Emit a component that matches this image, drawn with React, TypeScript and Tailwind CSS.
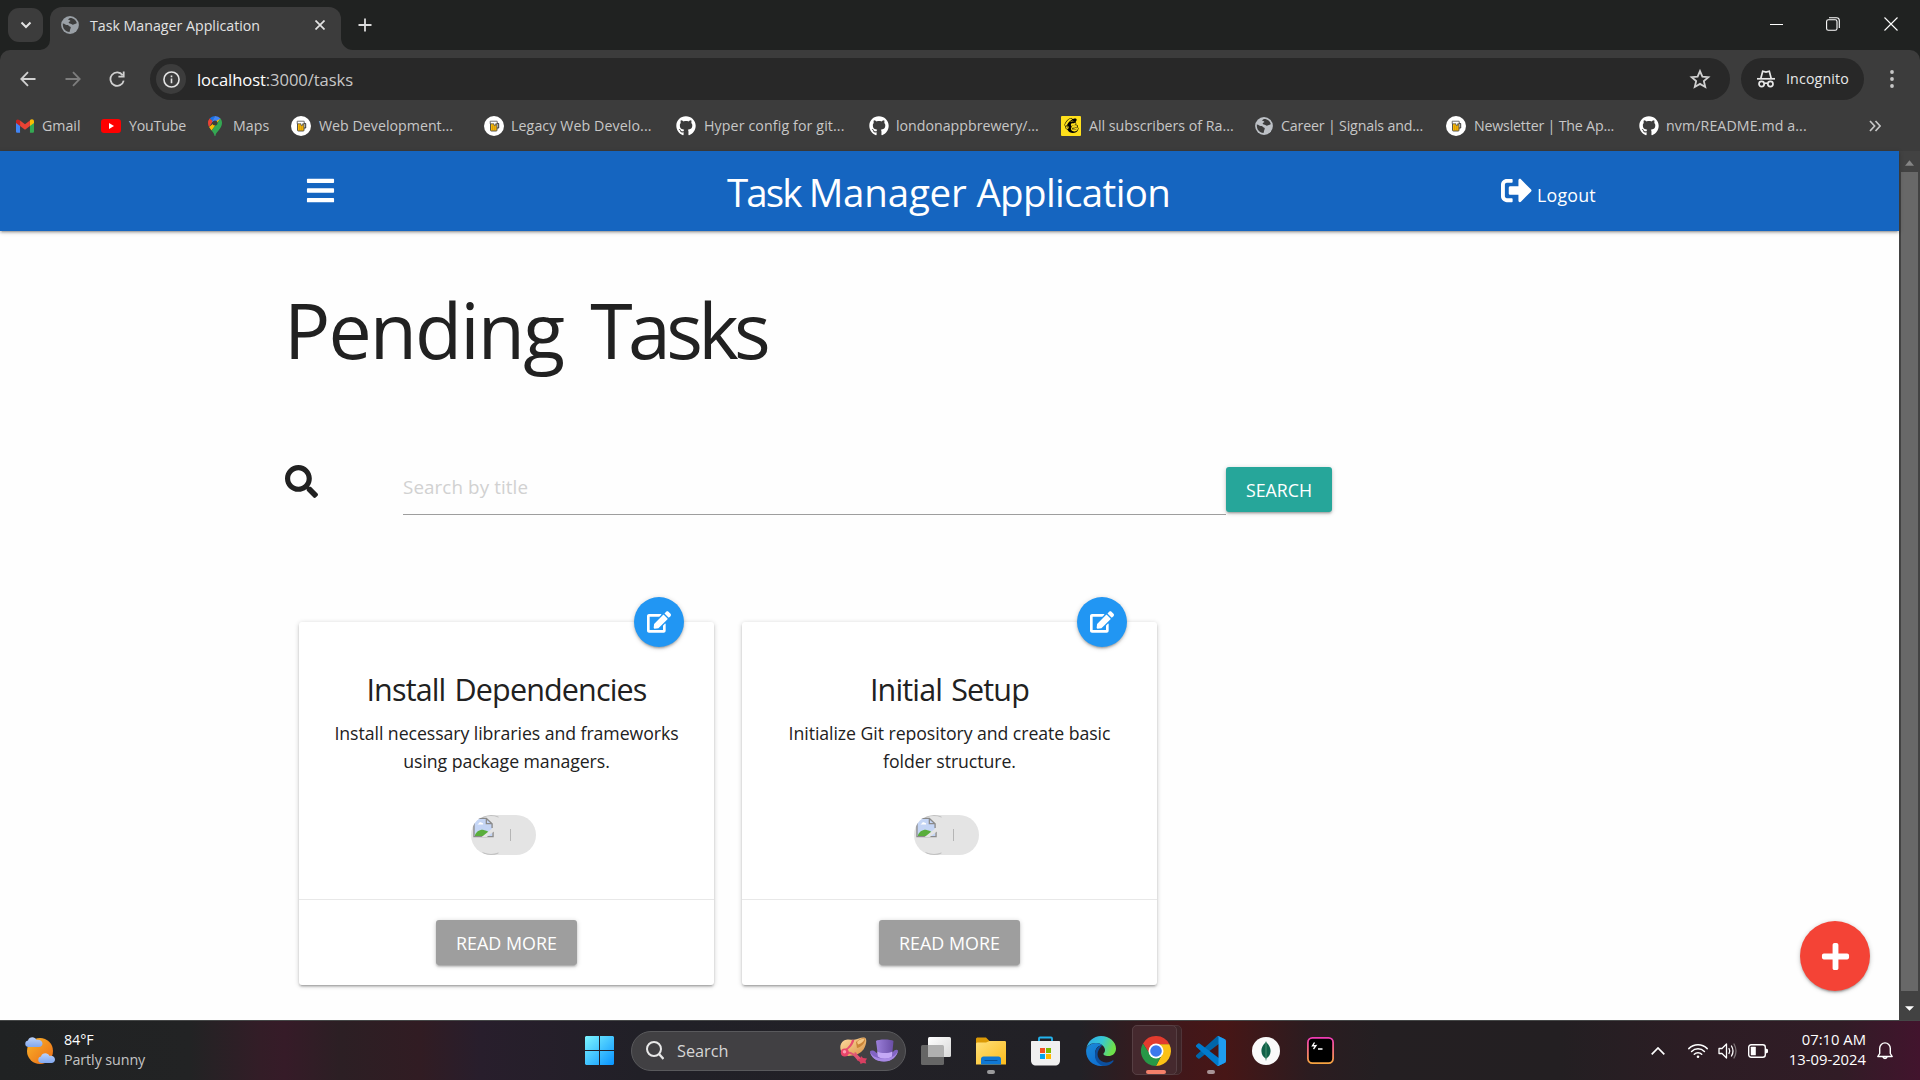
import React from "react";
import {
  FaBars,
  FaSignOutAlt,
  FaSearch,
  FaPlus,
  FaEdit,
  FaGithub,
  FaMailchimp,
} from "react-icons/fa";

/* ---------- small drawings ---------- */

const Globe = ({ color = "#9aa0a6" }: { color?: string }) => (
  <svg viewBox="0 0 18 18" className="h-[18px] w-[18px] shrink-0">
    <circle cx="9" cy="9" r="8.9" fill={color} />
    <path d="M1.8 7.4c2 .2 3 1.6 4.800 1.700 1.200.3 1.100 1.300 2.400 1.500 1 .4 1 1.400.4 2.200-.5.9-.2 2.200-1 3.200C4.500 15.700 1.500 12.500 1.800 7.400zM7 3.400c.7-1 2-1.700 3.500-1.400 2.600.6 4.700 2.500 5.300 5-.6 1.200-1.800.7-2.600 1.300-.9.700-2 .6-2.800-.2-.7-.6-2.300-.2-2.700-1.300-.2-.9.900-1.300 1.600-1.600.3-.8-.6-1.300-2.300-1.800z" fill="#3c3c3c" />
  </svg>
);

const Gmail = () => (
  <svg viewBox="0 0 20 15" className="h-[14px] w-[18px] shrink-0">
    <path d="M0 3v10.600C0 14.400.6 15 1.400 15H4.500V6.300z" fill="#4285f4" />
    <path d="M20 3v10.600c0 .8-.6 1.400-1.400 1.400h-3.100V6.300z" fill="#34a853" />
    <path d="M15.500 1.500v6L20 4.100V2.300C20 .2 17.700-.700 16 .6z" fill="#fbbc04" />
    <path d="M4.500 7.500v-6L10 5.600l5.500-4.100v6L10 11.600z" fill="#ea4335" />
    <path d="M0 2.300v1.800l4.500 3.400v-6L3.600.8C1.900-.500 0 .2 0 2.300z" fill="#c5221f" />
  </svg>
);

const YouTube = () => (
  <svg viewBox="0 0 20 14" className="h-[14px] w-5 shrink-0">
    <rect width="20" height="14" rx="3.200" fill="#f00" />
    <path d="M8 4v6l5-3z" fill="#fff" />
  </svg>
);

const Maps = () => (
  <svg viewBox="0 0 14 20" className="h-5 w-[14px] shrink-0">
    <path d="M7 0a7 7 0 0 0-5.400 2.500L5 5.300z" fill="#1a73e8" />
    <path d="M1.600 2.500A7 7 0 0 0 0 7c0 1.600.4 2.900 1.100 4L5 5.300z" fill="#ea4335" />
    <path d="M7 0l-3 6 5.200-.600L12.500 2.600A7 7 0 0 0 7 0z" fill="#4285f4" />
    <path d="M1.100 11c.7 1.100 1.600 2.200 2.500 3.400L12.500 2.600 8.400 5z" fill="#fbbc04" />
    <path d="M12.500 2.600L3.600 14.400C5 16.200 6.200 17.500 6.500 19.400c.1.800.9.800 1 0C8 16 14 12.500 14 7c0-1.700-.6-3.200-1.500-4.400z" fill="#34a853" />
    <circle cx="7" cy="7" r="2.500" fill="#3c3c3c" />
  </svg>
);

const Beer = () => (
  <svg viewBox="0 0 20 20" className="h-5 w-5 shrink-0">
    <circle cx="10" cy="10" r="10" fill="#fff" />
    <path d="M12.500 7.500h2.200v4.500h-2.200" fill="none" stroke="#333" strokeWidth="1" />
    <rect x="6.500" y="6" width="6.500" height="9" rx="0.800" fill="#f6b90b" stroke="#444" strokeWidth="0.900" />
    <path d="M6.200 5.200h7v2.600h-1.600v1.600H10V7.800H6.200z" fill="#fff" stroke="#444" strokeWidth="0.700" />
    <path d="M8.700 9.500v4.500M10.800 10v4" stroke="#c98a00" strokeWidth="0.700" />
  </svg>
);

const Mailchimp = () => (
  <span className="flex h-5 w-5 shrink-0 items-center justify-center rounded-[1px] bg-[#ffe01b]">
    <FaMailchimp className="h-[17px] w-[17px] text-black" />
  </span>
);

const Github = () => <FaGithub className="h-5 w-5 shrink-0 text-white" />;

const BrokenImage = () => (
  <svg viewBox="0 0 22 21" className="absolute left-[2px] top-[2px] h-[21px] w-[21px]">
    <path d="M1 1h13l6 5.500V19.500H1z" fill="#c4d5f5" />
    <path d="M6 6.500c.3-1.500 2-2 3-1 1.200-.2 1.800.8 1.600 1.800H5c-.3-.4.300-.8 1-.8z" fill="#fff" />
    <path d="M2 19c1-4 5-6.500 9-6 3 .5 5 1.500 5.500 2.500L12 19.500H2z" fill="#5aae3c" />
    <path d="M1 0v20h20V15M1 1h13l6 5.500v4.500M14 1v5.500h6" fill="none" stroke="#8a8a8a" strokeWidth="1.400" />
    <path d="M21.500 10.500L9 20.500h5.500L21.500 15z" fill="#e4e4e4" />
  </svg>
);

/* ---------- browser chrome ---------- */

const TabStrip = () => (
  <div className="flex h-[50px] items-end bg-[#202221]">
    <div className="mb-2 ml-2 flex h-[34px] w-[35px] items-center justify-center rounded-[11px] bg-[#3c3c3c]">
      <svg viewBox="0 0 12 8" className="h-2 w-3" fill="none" stroke="#e3e3e3" strokeWidth="2">
        <path d="M1.500 1.500L6 6l4.500-4.500" />
      </svg>
    </div>
    <svg viewBox="0 0 10 10" className="-ml-[3px] h-[10px] w-[10px]">
      <path d="M10 0v10H0A10 10 0 0 0 10 0z" fill="#3c3c3c" />
    </svg>
    <div className="flex h-[43px] w-[291px] items-center rounded-t-[12px] bg-[#3c3c3c] pl-[11px] pr-[16px] pb-2">
      <Globe />
      <span className="ml-[11px] mt-[2px] text-[14.2px] tracking-[0px] text-[#e3e3e3]">Task Manager Application</span>
      <svg viewBox="0 0 10 10" className="ml-auto h-[10px] w-[10px]" stroke="#e3e3e3" strokeWidth="1.700">
        <path d="M.5.5l9 9M9.500.5l-9 9" />
      </svg>
    </div>
    <svg viewBox="0 0 12 12" className="h-3 w-3">
      <path d="M0 0v12h12A12 12 0 0 1 0 0z" fill="#3c3c3c" />
    </svg>
    <svg viewBox="0 0 14 14" className="mb-[18px] ml-[5px] h-[14px] w-[14px]" stroke="#dcdcdc" strokeWidth="1.800">
      <path d="M7 0.500v13M.5 7h13" />
    </svg>
    <div className="mb-[19px] ml-auto mr-[22px] flex items-center">
      <svg viewBox="0 0 13 13" className="h-[13px] w-[13px]" stroke="#fff" strokeWidth="1">
        <path d="M0 6.500h13" />
      </svg>
      <svg viewBox="0 0 14 14" className="ml-[43px] h-[14px] w-[14px]" fill="none" stroke="#fff" strokeWidth="1.100">
        <rect x="0.600" y="2.800" width="10.400" height="10.400" rx="1.800" />
        <path d="M3 .7h7.500a2.800 2.800 0 0 1 2.800 2.800V11" />
      </svg>
      <svg viewBox="0 0 14 14" className="ml-[44px] h-[14px] w-[14px]" stroke="#fff" strokeWidth="1.100">
        <path d="M.5.5l13 13M13.500.5l-13 13" />
      </svg>
    </div>
  </div>
);

const Toolbar = () => (
  <div className="flex h-[58px] items-center rounded-t-[10px] bg-[#3c3c3c] pl-5">
    <svg viewBox="0 0 16 16" className="h-4 w-4" fill="none" stroke="#d0d0d0" strokeWidth="1.800">
      <path d="M15.500 8H1.500M8 1.200L1.300 8 8 14.800" />
    </svg>
    <svg viewBox="0 0 16 16" className="ml-[29px] h-4 w-4" fill="none" stroke="#7d7d7d" strokeWidth="1.800">
      <path d="M.5 8h14M8 1.200L14.700 8 8 14.800" />
    </svg>
    <svg viewBox="0 0 16 16" className="ml-[28px] h-4 w-4" fill="none" stroke="#d0d0d0" strokeWidth="1.800">
      <path d="M13.600 4.200A6.700 6.700 0 1 0 14.700 9.600M14.700.6v5.100H9.400" />
    </svg>
    <div className="ml-[25px] flex h-[42px] w-[1580px] items-center rounded-full bg-[#282828] pl-[6px] pr-[19px]">
      <span className="flex h-[30px] w-[30px] items-center justify-center rounded-full bg-[#3c3c3c]">
        <svg viewBox="0 0 18 18" className="h-[17px] w-[17px]" fill="none" stroke="#e3e3e3" strokeWidth="1.700">
          <circle cx="9" cy="9" r="8" />
          <path d="M9 8v5M9 4.800v1.800" />
        </svg>
      </span>
      <span className="ml-[11px] mt-[2px] text-[16.6px] tracking-[-0.08px] text-[#c7c7c7]">
        <span className="text-white">localhost</span>:3000/tasks
      </span>
      <svg viewBox="0 0 24 24" className="ml-auto h-[22px] w-[22px]" fill="none" stroke="#d0d0d0" strokeWidth="2">
        <path d="M12 3.400l2.600 6 6.500.6-4.900 4.300 1.500 6.400L12 17.300l-5.700 3.400 1.500-6.400L2.900 10l6.500-.6z" />
      </svg>
    </div>
    <div className="ml-[11px] flex h-[42px] w-[123px] items-center rounded-full bg-[#282828] pl-4">
      <svg viewBox="0 0 18 18" className="h-[18px] w-[18px]" fill="none" stroke="#e8e8e8" strokeWidth="1.700">
        <path d="M0 8.800h18" />
        <path d="M3.800 8.500L5.700 1.200l3.300.9 3.300-.9 1.900 7.300" />
        <circle cx="4.600" cy="14" r="2.600" />
        <circle cx="13.400" cy="14" r="2.600" />
        <path d="M7.200 13.600q1.800-1 3.600 0" />
      </svg>
      <span className="ml-[11px] text-[14.200px] tracking-[0.14px] text-[#e8e8e8]">Incognito</span>
    </div>
    <svg viewBox="0 0 4 18" className="ml-[26px] h-[18px] w-1" fill="#c7c7c7">
      <circle cx="2" cy="2" r="1.900" />
      <circle cx="2" cy="9" r="1.900" />
      <circle cx="2" cy="16" r="1.900" />
    </svg>
  </div>
);

const bookmarks: { icon: React.ReactNode; label: string; width: string; gap: string; tracking: string }[] = [
  { icon: <Gmail />, label: "Gmail", width: "w-[85px]", gap: "gap-[8px]", tracking: "tracking-[0px]" },
  { icon: <YouTube />, label: "YouTube", width: "w-[107px]", gap: "gap-[8px]", tracking: "tracking-[-0.2px]" },
  { icon: <Maps />, label: "Maps", width: "w-[83px]", gap: "gap-[11px]", tracking: "tracking-[0.1px]" },
  { icon: <Beer />, label: "Web Development...", width: "w-[193px]", gap: "gap-[8px]", tracking: "tracking-[0.02px]" },
  { icon: <Beer />, label: "Legacy Web Develo...", width: "w-[192px]", gap: "gap-[7px]", tracking: "tracking-[0.1px]" },
  { icon: <Github />, label: "Hyper config for git...", width: "w-[193px]", gap: "gap-[8px]", tracking: "tracking-[0.12px]" },
  { icon: <Github />, label: "londonappbrewery/...", width: "w-[192px]", gap: "gap-[7px]", tracking: "tracking-[0px]" },
  { icon: <Mailchimp />, label: "All subscribers of Ra...", width: "w-[194px]", gap: "gap-[8px]", tracking: "tracking-[0px]" },
  { icon: <Globe color="#bdc1c6" />, label: "Career | Signals and...", width: "w-[191px]", gap: "gap-[8px]", tracking: "tracking-[-0.16px]" },
  { icon: <Beer />, label: "Newsletter | The Ap...", width: "w-[193px]", gap: "gap-[8px]", tracking: "tracking-[-0.18px]" },
  { icon: <Github />, label: "nvm/README.md a...", width: "w-[180px]", gap: "gap-[7px]", tracking: "tracking-[0.1px]" },
];

const Bookmarks = () => (
  <div className="flex h-[43px] items-center bg-[#3c3c3c] pb-[7px] pl-4 text-[14.200px] text-[#c7c7c7]">
    {bookmarks.map((b) => (
      <div key={b.label} className={`flex shrink-0 items-center whitespace-nowrap ${b.width} ${b.gap} ${b.tracking}`}>
        {b.icon}
        <span>{b.label}</span>
      </div>
    ))}
    <svg viewBox="0 0 12 12" className="ml-auto mr-[39px] h-3 w-3 shrink-0" fill="none" stroke="#c7c7c7" strokeWidth="1.700">
      <path d="M1 1l4.600 5L1 11M6.500 1l4.600 5-4.600 5" />
    </svg>
  </div>
);

/* ---------- page ---------- */

const shadow2 =
  "shadow-[0_2px_2px_0_rgba(0,0,0,0.14),0_3px_1px_-2px_rgba(0,0,0,0.12),0_1px_5px_0_rgba(0,0,0,0.2)]";

const NavBar = () => (
  <nav className={`relative flex h-20 shrink-0 items-center bg-[#1565c0] text-white ${shadow2}`}>
    <FaBars className="mb-[1px] ml-[305px] h-[31px] w-[31px]" />
    <span className="ml-[391px] mt-[4px] w-[446px] whitespace-nowrap text-[38.500px] tracking-[-0.64px]">
      <span className="tracking-[-1.900px]">Task </span>
      <span className="tracking-[-0.200px]">Manager </span>
      <span className="tracking-[-0.640px]">Application</span>
    </span>
    <FaSignOutAlt className="mb-[1px] ml-[328px] h-[31px] w-[31px]" />
    <span className="ml-[5px] mt-[8px] text-[17.800px] tracking-[0.2px]">Logout</span>
  </nav>
);

const SearchRow = () => (
  <div className="ml-[285px] mt-[78px] flex h-[50px] w-[1047px] items-start">
    <FaSearch className="h-[33px] w-[33px] text-[#212121]" />
    <div className="ml-[85px] flex h-[50px] w-[823px] items-center border-b border-[#9e9e9e] pb-[4px] text-[18.800px] tracking-[0.1px] text-[#d1d1d1]">
      Search by title
    </div>
    <div className={`mt-[2px] flex h-[45px] w-[106px] items-center justify-center rounded-[3px] bg-[#26a69a] text-[17.800px] text-white ${shadow2}`}>
      <span className="mt-[1px]">SEARCH</span>
    </div>
  </div>
);

const TaskCard = ({ title, lines }: { title: string; lines: string[] }) => (
  <div className={`relative flex h-[363px] w-[415px] flex-col items-center rounded-[3px] bg-white ${shadow2}`}>
    <div className={`absolute right-[30px] top-[-25px] flex h-[50px] w-[50px] items-center justify-center rounded-full bg-[#2196f3] ${shadow2}`}>
      <FaEdit className="mb-[1px] h-[22px] w-[24px] text-white" />
    </div>
    <h2 className="mt-[42px] h-[50px] whitespace-nowrap text-[30.500px] leading-[50px] tracking-[-0.85px] [word-spacing:2px] text-[#212121]">{title}</h2>
    <div className="mt-[5px] text-center text-[17.700px] leading-[28px] tracking-[-0.06px] text-[#212121]">
      {lines.map((l) => (
        <div key={l} className="whitespace-nowrap">{l}</div>
      ))}
    </div>
    <div className="relative mr-[7px] mt-[40px] h-10 w-[65px] overflow-hidden rounded-full bg-[#e4e4e4]">
      <div className="absolute left-0 top-0 h-10 w-10 rounded-full border border-transparent border-y-[#c0c0c0] [clip-path:inset(0_12px_0_12px)]" />
      <div className="absolute left-[39px] top-[14px] h-3 w-px bg-[#b5b5b5]" />
      <BrokenImage />
    </div>
    <div className="mt-auto flex h-[86px] w-full items-start justify-center border-t border-[#e8e8e8] pt-5">
      <div className={`flex h-[45px] w-[141px] items-center justify-center rounded-[3px] bg-[#9e9e9e] text-[17.900px] text-white ${shadow2}`}>
        <span className="mt-[2px]">READ MORE</span>
      </div>
    </div>
  </div>
);

const Scrollbar = () => (
  <div className="flex h-full w-[21px] shrink-0 flex-col items-center bg-[#424242]">
    <svg viewBox="0 0 10 6" className="mt-[9px] h-[6px] w-[9px]"><path d="M0 6h10L5 0z" fill="#858585" /></svg>
    <div className="mt-[6px] h-[819px] w-[17px] bg-[#686868]" />
    <svg viewBox="0 0 10 5" className="mt-[15px] h-[5px] w-[9px]"><path d="M0 0h10L5 5z" fill="#fff" /></svg>
  </div>
);

/* ---------- taskbar ---------- */

const Weather = () => (
  <svg viewBox="0 0 30 30" className="h-[30px] w-[30px]">
    <defs>
      <linearGradient id="sun" x1="0" y1="0" x2="1" y2="1"><stop stopColor="#f9b52a" /><stop offset="1" stopColor="#ec6a16" /></linearGradient>
      <linearGradient id="cloud" x1="0" y1="0" x2="0" y2="1"><stop stopColor="#bcd3fb" /><stop offset="1" stopColor="#82a8f0" /></linearGradient>
    </defs>
    <circle cx="15" cy="15" r="13" fill="url(#sun)" />
    <path d="M3 11a3.300 3.300 0 0 1 0-6.500C4 .5 10 0 11.500 4c3-.6 6 1 6 3.500 0 2-1.500 3.500-3.500 3.500z" fill="url(#cloud)" />
    <path d="M16 27a3.300 3.300 0 0 1 0-6.500c1-4 7-4.500 8.500-.5 3-.6 5.500 1 5.500 3.500 0 2-1.500 3.500-3.500 3.500z" fill="url(#cloud)" />
  </svg>
);

const WindowsLogo = () => (
  <svg viewBox="0 0 29 29" className="h-[29px] w-[29px]">
    <defs>
      <linearGradient id="win" gradientUnits="userSpaceOnUse" x1="0" y1="0" x2="29" y2="29"><stop stopColor="#7df5ff" /><stop offset="1" stopColor="#0893ff" /></linearGradient>
    </defs>
    <path d="M1 0h13v14H0V1zM15 0h13l1 1v13H15zM0 15h14v14H1l-1-1zM15 15h14v13l-1 1H15z" fill="url(#win)" />
  </svg>
);

const SunHat = () => (
  <svg viewBox="0 0 28 28" className="h-7 w-7">
    <defs>
      <linearGradient id="straw" x1="0" y1="0" x2="1" y2="1"><stop stopColor="#ffdca0" /><stop offset="1" stopColor="#d99347" /></linearGradient>
    </defs>
    <path d="M3 17C-1 13-.5 6 4 3.500 8 1.500 11 3 14 2.800 18 2 22-.5 25 .8c2.500 1.500 1 8-1.500 11.700-3 4-7 5.500-11 6-4 .500-7 1-9.500-1.500z" fill="url(#straw)" />
    <path d="M16 5c3-3 7-4.500 9-3.500 1 3-3 8.500-8 9.500z" fill="#c98438" />
    <path d="M17 5c2-2.500 5-3.500 7.500-3.300 0 2-3 4.800-6.500 5.800z" fill="#f5c784" />
    <path d="M12 2.800l2.300.2C13.500 7.500 9.500 12 5.500 14l-1-1.500c4-2 6.500-5.700 7.500-9.700z" fill="#e84d6f" />
    <path d="M7.500 15.500c4 0 8 3 11 7.500M15 15.500c1 3 4 5 7 8" fill="none" stroke="#e05574" strokeWidth="2" />
    <circle cx="4.800" cy="15.500" r="4" fill="#e9456b" />
    <circle cx="4.500" cy="14.800" r="1.700" fill="#ff9db0" />
    <path d="M17 23l3.500-1.500.5-2.500 2 2 4 .5-1.500 2.500.8 2.500-3.300-.5-2.500 1-.5-2z" fill="#d83f61" />
  </svg>
);

const TopHat = () => (
  <svg viewBox="0 0 28 24" className="h-6 w-7">
    <defs>
      <linearGradient id="hat" x1="0" x2="1"><stop stopColor="#9b7fd9" /><stop offset="1" stopColor="#6a4ea6" /></linearGradient>
    </defs>
    <path d="M0 12.500c1-1.500 4-1.500 6 1 4 3 13 3 17-.5 1.500-2.500 4-3 5-1.500-1 6-6 11-14 11S1 18.500 0 12.500z" fill="#8264c4" />
    <path d="M6 2c2-2 15-2 17.500 0L22 17c-4 3-10 3-14 0z" fill="url(#hat)" />
    <path d="M7.200 12.500c4 2 11 2 15.200 0l-.5 5c-4 3-10 3-14 0z" fill="#c4a8f5" />
    <path d="M0 12.500c2 5.500 8 7 14 7s12-2 14-8c-1 6-6 11-14 11s-13-4-14-10z" fill="#a98ae4" />
  </svg>
);

const TaskView = () => (
  <svg viewBox="0 0 30 28" className="h-7 w-[30px]">
    <defs>
      <linearGradient id="tv" x1="0" y1="0" x2="1" y2="1"><stop stopColor="#fff" /><stop offset="1" stopColor="#d8d8d8" /></linearGradient>
    </defs>
    <rect x="0" y="8" width="23" height="20" rx="1.500" fill="#666" />
    <rect x="7" y="0" width="23" height="20" rx="1.500" fill="url(#tv)" />
    <path d="M7 8h14.500a1.500 1.500 0 0 1 1.500 1.500V20H8.500A1.500 1.500 0 0 1 7 18.500z" fill="#b0b0b0" />
  </svg>
);

const Explorer = () => (
  <svg viewBox="0 0 30 28" className="h-7 w-[30px]">
    <defs>
      <linearGradient id="fold" x1="0" y1="0" x2="1" y2="1"><stop stopColor="#ffe07a" /><stop offset="1" stopColor="#fcbc1c" /></linearGradient>
    </defs>
    <path d="M0 2C0 1 .8.500 1.800.5H10l3.500 3.500H28a2 2 0 0 1 2 2v8H0z" fill="#dc9a06" />
    <path d="M0 7c0-1 .6-1.500 1.500-1.500H10L13.500 4H28.500c1 0 1.500.6 1.500 1.500V27.500H0z" fill="url(#fold)" />
    <path d="M5 27.500V22c0-1.500 1-2.500 2.500-2.500h15c1.500 0 2.500 1 2.500 2.500v5.500z" fill="#0f78d4" />
    <path d="M9 23.500h12" stroke="#0a4f94" strokeWidth="1.200" strokeLinecap="round" />
  </svg>
);

const Store = () => (
  <svg viewBox="0 0 29 30" className="h-[30px] w-[29px]">
    <path d="M8 7V2.500C8 1.700 8.500 1.500 9 1.500h11c.6 0 1 .3 1 1V7" fill="none" stroke="#22b4ee" strokeWidth="1.800" />
    <path d="M0 6c0-.7.400-1 1-1h27c.6 0 1 .4 1 1v18c0 4-2 5.500-5 5.500H5c-3 0-5-1.500-5-5.500z" fill="#f0f0f0" />
    <path d="M9 12h5v5H9z" fill="#f25022" />
    <path d="M15 12h5v5h-5z" fill="#7fba00" />
    <path d="M9 18h5v5H9z" fill="#00a4ef" />
    <path d="M15 18h5v5h-5z" fill="#ffb900" />
  </svg>
);

const Edge = () => (
  <svg viewBox="0 0 30 30" className="h-[30px] w-[30px]">
    <defs>
      <linearGradient id="e1" x1="0" y1="0" x2="1" y2="0.300"><stop stopColor="#2fa8ea" /><stop offset="0.550" stopColor="#36c7d6" /><stop offset="1" stopColor="#6ee04a" /></linearGradient>
      <linearGradient id="e2" x1="0" y1="0" x2="0.600" y2="1"><stop stopColor="#1b8ad8" /><stop offset="1" stopColor="#0f6fd0" /></linearGradient>
    </defs>
    <path d="M.3 13C1.500 5.500 7.500 0 15 0c8.500 0 15 6 15 12.500 0 5-3.700 7.500-7.500 7.500-4 0-5.500-1.500-5-2.500 1-1 1.500-2 1.500-3.500 0-3.500-4-7-9-7-5.500 0-9 3-9.700 6z" fill="url(#e1)" />
    <path d="M.2 13.500C1 10 5 7 10 7c3 0 5 1 6.500 2.300C12 9 9 13 9 18c0 5 4 10 9.500 11.500-1 .3-2.200.5-3.500.5C6 30-.8 22.500.2 13.500z" fill="url(#e2)" />
    <path d="M12.500 14.500C10 19 12.500 26 20 26.500c2.500.2 5-1 6.500-2 .7-.4 1.300.2.900.9C25 28.500 21.500 30 18 30 12 29 8.500 24 9 18c.2-4.500 3-8.500 7.500-8.700-1.500 1-3 3-4 5.200z" fill="#0c4f9e" />
  </svg>
);

const Chrome = () => (
  <svg viewBox="0 0 48 48" className="h-[30px] w-[30px]">
    <path d="M24 13L14.500 29.500 3.200 12A24 24 0 0 1 45.300 13z" fill="#e33b2e" />
    <path d="M33.500 29.500L24 48A24 24 0 0 0 45.300 13H24z" fill="#fbc116" />
    <path d="M14.500 29.500L3.200 12A24 24 0 0 0 24 48l9.500-18.500z" fill="#279847" />
    <circle cx="24" cy="24" r="12" fill="#fff" />
    <circle cx="24" cy="24" r="9.300" fill="#3b78ed" />
  </svg>
);

const VsCode = () => (
  <svg viewBox="0 0 100 100" className="h-[30px] w-[30px]">
    <path d="M96.500 10.800L75.900.9a6.200 6.200 0 0 0-7.100 1.200L1.300 63.700a4.200 4.200 0 0 0 0 6.200l5.500 5a4.200 4.200 0 0 0 5.300.2l81.200-61.600c2.700-2.100 6.700-.1 6.700 3.300v-.2c0-2.400-1.400-4.700-3.500-5.800z" fill="#0065a9" />
    <path d="M96.500 89.200l-20.600 9.900a6.200 6.200 0 0 1-7.100-1.200L1.300 36.300a4.200 4.200 0 0 1 0-6.200l5.500-5a4.200 4.200 0 0 1 5.300-.2l81.200 61.600c2.700 2.100 6.700.1 6.700-3.300v.2c0 2.400-1.400 4.700-3.500 5.800z" fill="#007acc" />
    <path d="M75.900 99.100a6.200 6.200 0 0 1-7.100-1.200c2.300 2.300 6.200.7 6.200-2.600V4.700c0-3.300-3.900-4.900-6.200-2.600A6.200 6.200 0 0 1 75.900.9l20.600 9.900A6.200 6.200 0 0 1 100 16.400v67.200c0 2.400-1.400 4.600-3.500 5.600z" fill="#1f9cf0" />
  </svg>
);

const Mongo = () => (
  <svg viewBox="0 0 28 28" className="h-7 w-7">
    <circle cx="14" cy="14" r="14" fill="#fafafa" />
    <path d="M14 4.500c.6 1.600 4.600 4 4.600 9.500 0 3.700-2.200 6.300-4.200 7.500l-.2 2h-.4l-.2-2c-2-1.200-4.200-3.800-4.200-7.500 0-5.500 4-7.900 4.600-9.500z" fill="#116149" />
    <path d="M14 4.500v17" stroke="#5fa67f" strokeWidth="0.700" />
  </svg>
);

const Hyper = () => (
  <svg viewBox="0 0 27 27" className="h-[27px] w-[27px]">
    <defs>
      <linearGradient id="hy" x1="0" y1="0" x2="0" y2="1"><stop stopColor="#f03bb5" /><stop offset="1" stopColor="#f7a440" /></linearGradient>
    </defs>
    <rect x="0.900" y="0.900" width="25.200" height="25.200" rx="4.500" fill="#000" stroke="url(#hy)" strokeWidth="1.800" />
    <path d="M7.500 5.500L5.500 8.800l3.500-.3-2.500 3.500M11 12h4.500" fill="none" stroke="#fff" strokeWidth="1.300" />
  </svg>
);

const apps: { id: string; icon: React.ReactNode; dot?: string }[] = [
  { id: "view", icon: <TaskView /> },
  { id: "explorer", icon: <Explorer />, dot: "w-2 bg-[#9a9a9c]" },
  { id: "store", icon: <Store /> },
  { id: "edge", icon: <Edge /> },
  { id: "chrome", icon: <Chrome />, dot: "w-5 bg-[#f5806a]" },
  { id: "code", icon: <VsCode />, dot: "w-2 bg-[#a89496]" },
  { id: "mongo", icon: <Mongo /> },
  { id: "hyper", icon: <Hyper /> },
];

const Taskbar = () => (
  <div className="flex h-[60px] items-center border-t border-[#454747] bg-[linear-gradient(90deg,#202223_0px,#222324_190px,#331d27_260px,#361b28_285px,#2c1f24_340px,#311c23_420px,#281e2c_480px,#212027_640px,#222126_1080px,#41171a_1180px,#471616_1225px,#2b1c20_1310px,#241f22_1380px,#231f22_1560px,#2c1d24_1690px,#311c26_1840px,#42142d_1920px)] text-white">
    <div className="ml-[25px] flex w-[560px] items-center">
      <Weather />
      <div className="ml-[9px] mb-[2px] text-[14.300px] leading-[20px] tracking-[-0.09px]">
        <div>84°F</div>
        <div className="text-[#c4c4c4]">Partly sunny</div>
      </div>
    </div>
    <WindowsLogo />
    <div className="ml-[17px] flex h-10 w-[275px] items-center rounded-full border border-[#59595c] bg-[#414043] pl-[14px] pr-[7px]">
      <svg viewBox="0 0 18 19" className="h-[19px] w-[18px]" fill="none" stroke="#e8e8e8" strokeWidth="2">
        <circle cx="8" cy="8" r="7" />
        <path d="M13 13l4.500 5" strokeWidth="2.300" />
      </svg>
      <span className="ml-[13px] mt-[1px] text-[16.300px] text-[#d6d6d6]">Search</span>
      <span className="ml-auto flex items-center gap-[2px]">
        <SunHat />
        <TopHat />
      </span>
    </div>
    <div className="ml-[2px] flex">
      {apps.map((a) => (
        <div key={a.id} className="relative flex h-[59px] w-[55px] items-center justify-center">
          {a.id === "chrome" && (
            <>
              <span className="absolute left-[4px] top-[4px] h-[50px] w-[50px] rounded-[5px] border border-[#4f3438] bg-[#3d2427]" />
              <span className="absolute left-[4px] top-[4px] h-[50px] w-[45px] rounded-[5px] border border-[#563f43] bg-[#45292e]" />
            </>
          )}
          <span className="relative">{a.icon}</span>
          {a.dot && <span className={`absolute bottom-[6px] h-1 rounded-full ${a.dot}`} />}
        </div>
      ))}
    </div>
    <div className="ml-auto mr-[27px] flex items-center">
      <svg viewBox="0 0 14 8" className="h-2 w-[14px]" fill="none" stroke="#fff" strokeWidth="1.700"><path d="M.7 7.300L7 1l6.300 6.300" /></svg>
      <svg viewBox="0 0 20 16" className="ml-[23px] h-4 w-5" fill="none" stroke="#fff" strokeWidth="1.500" strokeLinecap="round">
        <path d="M.8 5.600a13 13 0 0 1 18.400 0M3.600 8.500a9 9 0 0 1 12.800 0M6.300 11.300a5.200 5.200 0 0 1 7.400 0" />
        <circle cx="10" cy="13.800" r="1.300" fill="#fff" stroke="none" />
      </svg>
      <svg viewBox="0 0 20 18" className="ml-[10px] h-[18px] w-5" fill="none" stroke="#fff" strokeWidth="1.300" strokeLinecap="round" strokeLinejoin="round">
        <path d="M1 6.500h3L8.500 2v14L4 11.500H1zM11 6.500q1.500 2.500 0 5M13.500 4q3 5 0 10" />
        <path d="M16 2q4 7 0 14" stroke="#7c7376" />
      </svg>
      <svg viewBox="0 0 21 14" className="ml-[10px] h-[14px] w-[21px]" fill="none" stroke="#fff" strokeWidth="1.400">
        <rect x="0.700" y="0.700" width="16.600" height="12.600" rx="2.500" />
        <rect x="2.800" y="2.800" width="5" height="8.400" rx="0.500" fill="#fff" stroke="none" />
        <path d="M18 4.500l2 1v3l-2 1z" fill="#fff" stroke="none" />
      </svg>
      <div className="mb-[3px] ml-[17px] w-[80px] whitespace-nowrap text-right text-[14.800px] leading-[20px] tracking-[0px]">
        <div>07:10 AM</div>
        <div>13-09-2024</div>
      </div>
      <svg viewBox="0 0 16 18" className="ml-[11px] h-[18px] w-4" fill="none" stroke="#fff" strokeWidth="1.400" strokeLinejoin="round">
        <path d="M2.700 11.500V6.200a5.300 5.300 0 0 1 10.600 0v5.300l1.900 3H.8zM5.800 14.800a2.300 2.300 0 0 0 4.400 0" />
      </svg>
    </div>
  </div>
);

export default function App() {
  return (
    <div className="flex h-[1080px] w-[1920px] flex-col overflow-hidden bg-[#202221] font-['Open_Sans','Noto_Sans',sans-serif]">
      <TabStrip />
      <Toolbar />
      <Bookmarks />
      <div className="flex h-[869px] bg-[#fefefe]">
        <main className="relative flex w-[1899px] flex-col bg-[#fefefe]">
          <NavBar />
          <h1 className="ml-[284px] mt-[41px] h-[115px] whitespace-nowrap text-[77px] leading-[115px] text-[#212121]">
            <span className="tracking-[-1.900px] [word-spacing:9px]">Pending </span>
            <span className="tracking-[-4.600px]">Tasks</span>
          </h1>
          <SearchRow />
          <div className="ml-[299px] mt-[107px] flex gap-[28px]">
            <TaskCard
              title="Install Dependencies"
              lines={["Install necessary libraries and frameworks", "using package managers."]}
            />
            <TaskCard
              title="Initial Setup"
              lines={["Initialize Git repository and create basic", "folder structure."]}
            />
          </div>
          <div className={`absolute bottom-[29px] right-[29px] flex h-[70px] w-[70px] items-center justify-center rounded-full bg-[#f44336] ${shadow2}`}>
            <FaPlus className="h-[31px] w-[31px] text-white" />
          </div>
        </main>
        <Scrollbar />
      </div>
      <Taskbar />
    </div>
  );
}
